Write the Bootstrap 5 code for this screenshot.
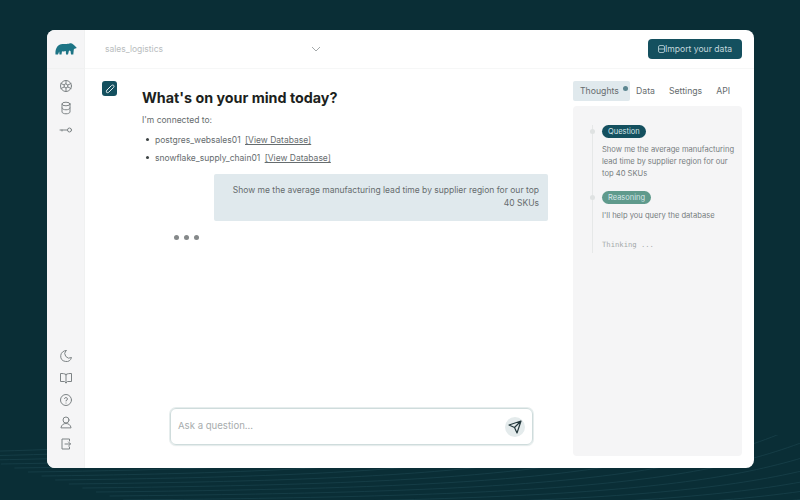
<!DOCTYPE html>
<html lang="en">
<head>
  <meta charset="UTF-8" />
  <meta name="viewport" content="width=device-width, initial-scale=1.0" />
  <title>What's on your mind today?</title>
  <link href="https://cdn.jsdelivr.net/npm/bootstrap@5.3.0/dist/css/bootstrap.min.css" rel="stylesheet" />
  <style>
    html, body { height: 100%; }
    body {
      background: #0a2e36;
      font-family: Inter, "Liberation Sans", sans-serif;
      font-size: 8.5px;
      color: #666c6e;
      overflow: hidden;
      padding: 30px 46px 32px 47px;
      position: relative;
    }
    .waves { position: absolute; left: 0; bottom: 0; width: 800px; height: 65px; }
    .app-window {
      position: relative;
      height: 438px;
      background: #fff;
      border-radius: 8px;
      overflow: hidden;
    }
    .side-rail {
      width: 38px;
      background: #f5f5f6;
      border-right: 1px solid #f0f1f1;
      color: #7d8385;
    }
    .rail-logo { height: 39px; border-bottom: 1px solid #f0f1f1; margin-bottom: 6px; }
    .rail-icon { width: 14px; height: 14px; fill: none; stroke: currentColor; stroke-width: 1; stroke-linecap: round; stroke-linejoin: round; }
    .rail-group { gap: 8px; }
    .rail-group-low { gap: 8px; padding-bottom: 17px; }
    .top-strip { height: 39px; padding: 0 12px 0 20px; border-bottom: 1px solid #f6f7f7; }
    .db-select { width: 216px; color: #b9bdbe; font-size: 8.5px; }
    .import-btn {
      background: #14505f;
      color: #c4d8dd;
      font-size: 8.6px;
      padding: 0;
      height: 20px;
      border-radius: 4px;
      border: 0;
      width: 94px;
      white-space: nowrap;
    }
    .import-btn:hover { background: #14505f; color: #c4d8dd; }
    .import-btn svg { flex: none; }
    .chat-col { width: 475px; padding: 12px 12px 23px 17px; }
    .pen-box { width: 15px; height: 15px; border-radius: 3px; background: #14505f; color: #e6f0f2; flex: none; }
    .chat-body { padding-left: 25px; }
    .chat-title { font-size: 14.3px; font-weight: 700; color: #1c1f20; margin: 7px 0 6px; line-height: 20px; }
    .db-list { list-style: none; margin: 0; padding: 0; }
    .db-list li { height: 18px; line-height: 18px; padding-left: 13px; position: relative; }
    .db-list li::before { content: ""; position: absolute; left: 4px; top: 7px; width: 3px; height: 3px; border-radius: 50%; background: #3d4344; }
    .db-list a { color: #666c6e; margin-left: 2px; text-underline-offset: 1px; }
    .connected { line-height: 12px; margin-bottom: 5px; }
    .user-bubble {
      margin: 7px 0 0 72px;
      background: #e0e9ed;
      border-radius: 2px;
      padding: 10px 9px 9px 16px;
      text-align: right;
      line-height: 13px;
      height: 47px;
    }
    .typing-dots { gap: 5px; padding: 13.5px 0 0 31.5px; }
    .typing-dots span { width: 5px; height: 5px; border-radius: 50%; background: #85898a; }
    .ask-box {
      margin: auto 15px 0 68px;
      height: 37px;
      border: 1px solid #cfdcdc;
      border-radius: 6px;
      box-shadow: 0 0 0 1px #e6eded, 0 1px 2px rgba(0,0,0,.06);
      padding: 0 7px;
      font-size: 9.6px;
      color: #a7acad;
    }
    .send-btn { width: 20px; height: 20px; border-radius: 50%; background: #e4ebec; color: #24383d; flex: none; }
    .right-col { width: 169px; margin: 12px 0 0 13px; }
    .tab-row { height: 20px; margin-bottom: 5px; }
    .tab-item { color: #666c6e; padding: 0 7px; line-height: 20px; font-size: 8.7px; position: relative; }
    .tab-item.on { background: #e0e9ed; border-radius: 2px; padding-right: 11px; width: 57px; margin-right: -1px; }
    .tab-dot { position: absolute; top: 5px; right: 2px; width: 5px; height: 5px; border-radius: 50%; background: #5c8690; }
    .thought-panel { height: 350px; background: #f5f5f6; border-radius: 4px; padding: 19px 5px 0 17px; font-size: 7.6px; color: #777d7f; }
    .thought-line { border-left: 1px solid #e6e8e8; margin-left: 2px; padding-left: 9px; height: 128px; position: relative; }
    .step-tag {
      display: inline-block;
      height: 13px;
      line-height: 13px;
      padding: 0 6px;
      border-radius: 7px;
      font-size: 7.5px;
      color: #d6e6e9;
      position: relative;
    }
    .step-tag::before { content: ""; position: absolute; left: -12px; top: 4px; width: 5px; height: 5px; border-radius: 50%; background: #dfe2e2; }
    .tag-q { background: #14505f; }
    .tag-r { background: #5f9a8c; }
    .step-text { margin: 6px 0 11px; line-height: 12px; }
    .thinking { font-family: "DejaVu Sans Mono", "Liberation Mono", monospace; font-size: 7.2px; color: #a4a9aa; margin-top: 18px; }
  </style>
</head>
<body>
  <svg class="waves" id="waves" viewBox="0 75 800 65" fill="none" stroke="#1c4750" stroke-width="0.6"></svg>

  <div class="app-window d-flex">
    <!-- Left icon rail -->
    <div class="side-rail d-flex flex-column align-items-center">
      <div class="rail-logo d-flex align-items-center justify-content-center w-100">
        <svg width="22" height="12" viewBox="0 0 22 12" fill="#1d7485"><path d="M0.500 11.500C0 7 1.500 3 5 1.500C8 .5 11 1.200 14 .8C15.500 0 17 .3 18 1.300L20 3L21.800 5L19.500 5.800L18.800 6.500L18.300 11.500H16L15.500 8L14 7.500L13 11.500H11L10.800 8C9.500 8.500 8.300 8.500 7 8.200L6.500 11.500H4.500L4.200 8.500L3 11.500Z"/></svg>
      </div>
      <div class="d-flex flex-column rail-group mt-1">
        <svg class="rail-icon" viewBox="0 0 14 14"><circle cx="7" cy="7" r="5.500"/><path d="M7 1.500V5M7 9V12.500M2 4.500L5.200 6M8.800 8L12 9.500M12 4.500L8.800 6M5.200 8L2 9.500"/><path d="M7 5L8.800 6V8L7 9L5.200 8V6Z"/></svg>
        <svg class="rail-icon" viewBox="0 0 14 14"><ellipse cx="7" cy="3" rx="4" ry="1.800"/><path d="M3 3V11C3 12 5 12.800 7 12.800S11 12 11 11V3M3 7C3 8 5 8.800 7 8.800S11 8 11 7"/></svg>
        <svg class="rail-icon" viewBox="0 0 14 14"><circle cx="10.500" cy="7" r="2"/><path d="M8.500 7H1M3 7V8"/></svg>
      </div>
      <div class="d-flex flex-column rail-group-low mt-auto">
        <svg class="rail-icon" viewBox="0 0 14 14"><path d="M7 1.500A5.500 5.500 0 1 0 12.500 8.500A4.500 4.500 0 0 1 7 1.500Z"/></svg>
        <svg class="rail-icon" viewBox="0 0 14 14"><path d="M7 3.500C5.500 2.500 3.500 2.500 1.500 2.500V10.500H5.500L7 12L8.500 10.500H12.500V2.500C10.500 2.500 8.500 2.500 7 3.500ZM7 3.500V12"/></svg>
        <svg class="rail-icon" viewBox="0 0 14 14"><circle cx="7" cy="7" r="5.500"/><path d="M5.500 5.500A1.500 1.500 0 1 1 7 7.500V8M7 10V10.100"/></svg>
        <svg class="rail-icon" viewBox="0 0 14 14"><circle cx="7" cy="5" r="3"/><path d="M2 12.500C2.500 9.800 4.500 8.500 7 8.500S11.500 9.800 12 12.500Z"/></svg>
        <svg class="rail-icon" viewBox="0 0 14 14"><path d="M10.500 4V2H3V12H10.500V10M6 7H11.500M9.500 5L11.500 7L9.500 9"/></svg>
      </div>
    </div>

    <div class="flex-grow-1 d-flex flex-column">
      <!-- Top bar -->
      <div class="top-strip d-flex align-items-center justify-content-between">
        <div class="db-select d-flex align-items-center justify-content-between">
          <span>sales_logistics</span>
          <svg width="10" height="6" viewBox="0 0 10 6" fill="none" stroke="#a4a9aa" stroke-width="1"><path d="M1 1L5 5L9 1"/></svg>
        </div>
        <button type="button" class="btn import-btn d-flex align-items-center justify-content-center">
          <svg width="7" height="8" viewBox="0 0 7 8" fill="none" stroke="#c4d8dd" stroke-width=".8"><rect x=".5" y=".5" width="6" height="7" rx="1.500"/><path d="M.5 4H6.500"/></svg>Import your data
        </button>
      </div>

      <div class="d-flex flex-grow-1">
        <!-- Chat -->
        <div class="chat-col d-flex flex-column">
          <div class="d-flex">
            <div class="pen-box d-flex align-items-center justify-content-center">
              <svg width="10" height="10" viewBox="0 0 10 10" fill="none" stroke="currentColor" stroke-width="1" stroke-linecap="round" stroke-linejoin="round"><path d="M2 6L6.500 1.500C7.300.8 8.300 1 8.800 1.500S9 2.800 8.500 3.500L3.800 8.200C3 8.800 2 8.800 1.600 8.400S1.300 6.800 2 6Z"/></svg>
            </div>
            <div class="chat-body flex-grow-1">
              <h1 class="chat-title">What's on your mind today?</h1>
              <div class="connected">I'm connected to:</div>
              <ul class="db-list">
                <li>postgres_websales01 <a href="#">[View Database]</a></li>
                <li>snowflake_supply_chain01 <a href="#">[View Database]</a></li>
              </ul>
              <div class="user-bubble">Show me the average manufacturing lead time by supplier region for our top 40 SKUs</div>
              <div class="typing-dots d-flex"><span></span><span></span><span></span></div>
            </div>
          </div>
          <div class="ask-box d-flex align-items-center justify-content-between">
            <span>Ask a question...</span>
            <div class="send-btn d-flex align-items-center justify-content-center">
              <svg width="14" height="14" viewBox="0 0 14 14" fill="none" stroke="currentColor" stroke-width="1.200" stroke-linejoin="round"><path d="M1 5L13 1L9 13L6.500 7.500ZM6.500 7.500L13 1"/></svg>
            </div>
          </div>
        </div>

        <!-- Right panel -->
        <div class="right-col d-flex flex-column">
          <div class="tab-row d-flex">
            <div class="tab-item on">Thoughts<span class="tab-dot"></span></div>
            <div class="tab-item">Data</div>
            <div class="tab-item">Settings</div>
            <div class="tab-item">API</div>
          </div>
          <div class="thought-panel">
            <div class="thought-line">
              <span class="step-tag tag-q">Question</span>
              <div class="step-text">Show me the average manufacturing lead time by supplier region for our top 40 SKUs</div>
              <span class="step-tag tag-r">Reasoning</span>
              <div class="step-text">I'll help you query the database</div>
              <div class="thinking">Thinking ...</div>
            </div>
          </div>
        </div>
      </div>
    </div>
  </div>

  <script src="https://cdn.jsdelivr.net/npm/bootstrap@5.3.0/dist/js/bootstrap.bundle.min.js"></script>
  <script>
    // faint contour lines behind the window
    let lines = '';
    for (let i = 0; i < 22; i++) {
      const y = 70 + i * 4;
      const shift = i * 34;
      lines += `<path d="M${-40 + shift * 0.4} ${y + 22}C${160 + shift} ${y + 18} ${300 + shift} ${y + 6} ${420 + shift} ${y - 46}S${640 + shift} ${y - 70} ${860 + shift} ${y - 90}"/>`;
    }
    document.getElementById('waves').innerHTML = lines;
  </script>
</body>
</html>
